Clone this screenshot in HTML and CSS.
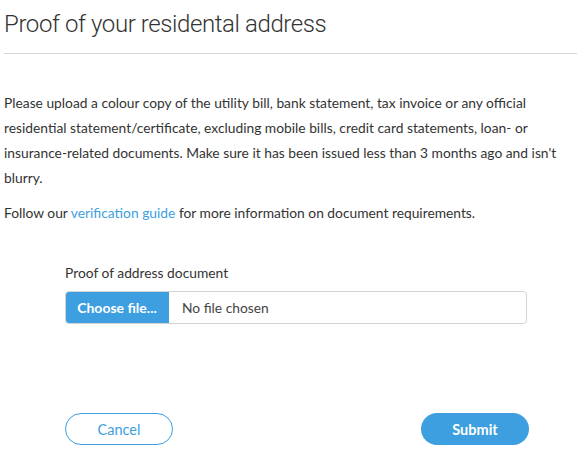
FILE: index.html
```html
<!DOCTYPE html>
<html>
<head>
<meta charset="utf-8">
<link rel="stylesheet" href="styles.css">
</head>
<body>
<div class="page">
  <h1 class="title">Proof of your residental address</h1>
  <hr class="divider">
  <p class="text">Please upload a colour copy of the utility bill, bank statement, tax invoice or any official residential statement/certificate, excluding mobile bills, credit card statements, loan- or insurance-related documents. Make sure it has been issued less than 3 months ago and isn't blurry.</p>
  <p class="text follow">Follow our <a class="link" href="#">verification guide</a> for more information on document requirements.</p>
  <div class="form">
    <label class="label">Proof of address document</label>
    <div class="file">
      <span class="file-btn">Choose file...</span>
      <span class="file-name">No file chosen</span>
    </div>
  </div>
  <div class="actions">
    <button class="btn btn-cancel">Cancel</button>
    <button class="btn btn-submit">Submit</button>
  </div>
</div>
</body>
</html>
```
FILE: styles.css
```css
html, body {
  margin: 0;
  padding: 0;
  background: #ffffff;
}
.page {
  width: 573px;
  padding-left: 4px;
  font-family: "Lato", "Liberation Sans", sans-serif;
  color: #333333;
}
.title {
  margin: 0;
  padding-top: 9px;
  font-family: "Roboto", sans-serif;
  font-weight: 300;
  font-size: 24px;
  letter-spacing: -0.4px;
  line-height: 30px;
  color: #333333;
}
.divider {
  margin: 14px 0 0 0;
  border: 0;
  border-top: 1px solid #d6d6d6;
  height: 0;
}
.text {
  margin: 36px 0 0 0;
  font-size: 13.8px;
  line-height: 25px;
}
.text.follow {
  margin-top: 10px;
}
.link {
  color: #3d9fe0;
  text-decoration: none;
}
.form {
  margin: 39px 0 0 61px;
  width: 462px;
}
.label {
  display: block;
  font-size: 13.8px;
  line-height: 18px;
}
.file {
  margin-top: 9px;
  display: flex;
  height: 33px;
  border: 1px solid #d4d4d4;
  border-radius: 4px;
  box-sizing: border-box;
  overflow: hidden;
}
.file-btn {
  display: flex;
  align-items: center;
  justify-content: center;
  width: 104px;
  background: #3d9fe0;
  color: #ffffff;
  font-weight: 700;
  font-size: 14px;
  margin: -1px 0 -1px -1px;
}
.file-name {
  display: flex;
  align-items: center;
  padding-left: 13px;
  font-size: 13.8px;
  color: #444;
}
.actions {
  margin: 89px 0 0 61px;
  width: 464px;
  display: flex;
  justify-content: space-between;
}
.btn {
  width: 108px;
  height: 32px;
  border-radius: 16px;
  font-family: "Lato", "Liberation Sans", sans-serif;
  font-size: 14.5px;
  cursor: pointer;
}
.btn-cancel {
  background: #ffffff;
  border: 1px solid #3d9fe0;
  color: #3d9fe0;
}
.btn-submit {
  background: #3d9fe0;
  border: 0;
  color: #ffffff;
  font-weight: 700;
}
```
